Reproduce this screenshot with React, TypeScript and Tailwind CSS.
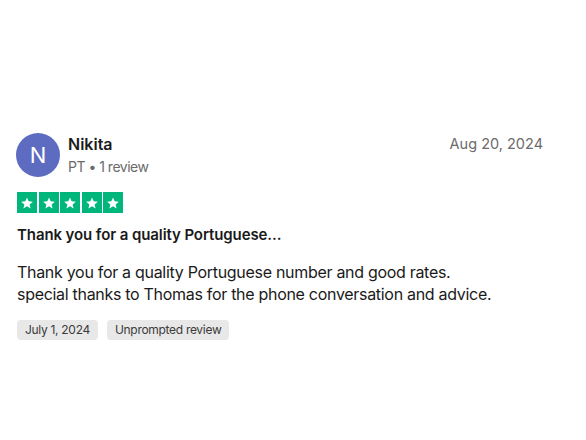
import React from 'react';

const Star: React.FC = () => (
  <div className="w-[20px] h-[21px] bg-[#00b67a] flex items-center justify-center">
    <svg viewBox="0 0 24 24" className="w-[14px] h-[14px]" fill="#ffffff">
      <path d="M12 2.5l2.8 6.6 7.2.6-5.5 4.7 1.7 7-6.2-3.8-6.2 3.8 1.7-7L2 9.7l7.2-.6z" />
    </svg>
  </div>
);

const App: React.FC = () => {
  return (
    <div className="w-[586px] h-[440px] bg-white" style={{ fontFamily: 'Inter, "Open Sans", sans-serif' }}>
      <div className="pt-[133px] pl-[16px] pr-[43px]">
        <div className="flex items-start">
          <div className="w-[44px] h-[44px] rounded-full bg-[#5d6cc1] text-white flex items-center justify-center text-[22px] shrink-0">
            N
          </div>
          <div className="ml-[8px] flex-1">
            <div className="text-[16px] leading-[20px] font-semibold text-[#1a1a1a] mt-[1px]">Nikita</div>
            <div className="text-[14px] leading-[18px] tracking-[-0.5px] text-[#6b6b6b] mt-[4px]">PT • 1 review</div>
          </div>
          <div className="text-[14.5px] leading-[20px] text-[#6b6b6b] mt-[1px]">Aug 20, 2024</div>
        </div>

        <div className="flex gap-[1.5px] mt-[15px] ml-[1px]">
          <Star />
          <Star />
          <Star />
          <Star />
          <Star />
        </div>

        <div className="mt-[12px] ml-[1px] text-[15px] leading-[20px] font-semibold tracking-[-0.1px] text-[#1a1a1a]">
          Thank you for a quality Portuguese...
        </div>

        <div className="mt-[16px] ml-[1px] text-[16px] leading-[22px] tracking-[-0.3px] text-[#1a1a1a]">
          <p>Thank you for a quality Portuguese number and good rates.</p>
          <p>special thanks to Thomas for the phone conversation and advice.</p>
        </div>

        <div className="flex gap-[9px] mt-[15px] ml-[1px]">
          <span className="h-[20px] px-[8px] rounded-[4px] bg-[#e8e8e8] text-[12px] leading-[20px] tracking-[-0.3px] text-[#3a3a3a]">July 1, 2024</span>
          <span className="h-[20px] px-[8px] rounded-[4px] bg-[#e8e8e8] text-[12px] leading-[20px] tracking-[-0.3px] text-[#3a3a3a]">Unprompted review</span>
        </div>
      </div>
    </div>
  );
};

export default App;
